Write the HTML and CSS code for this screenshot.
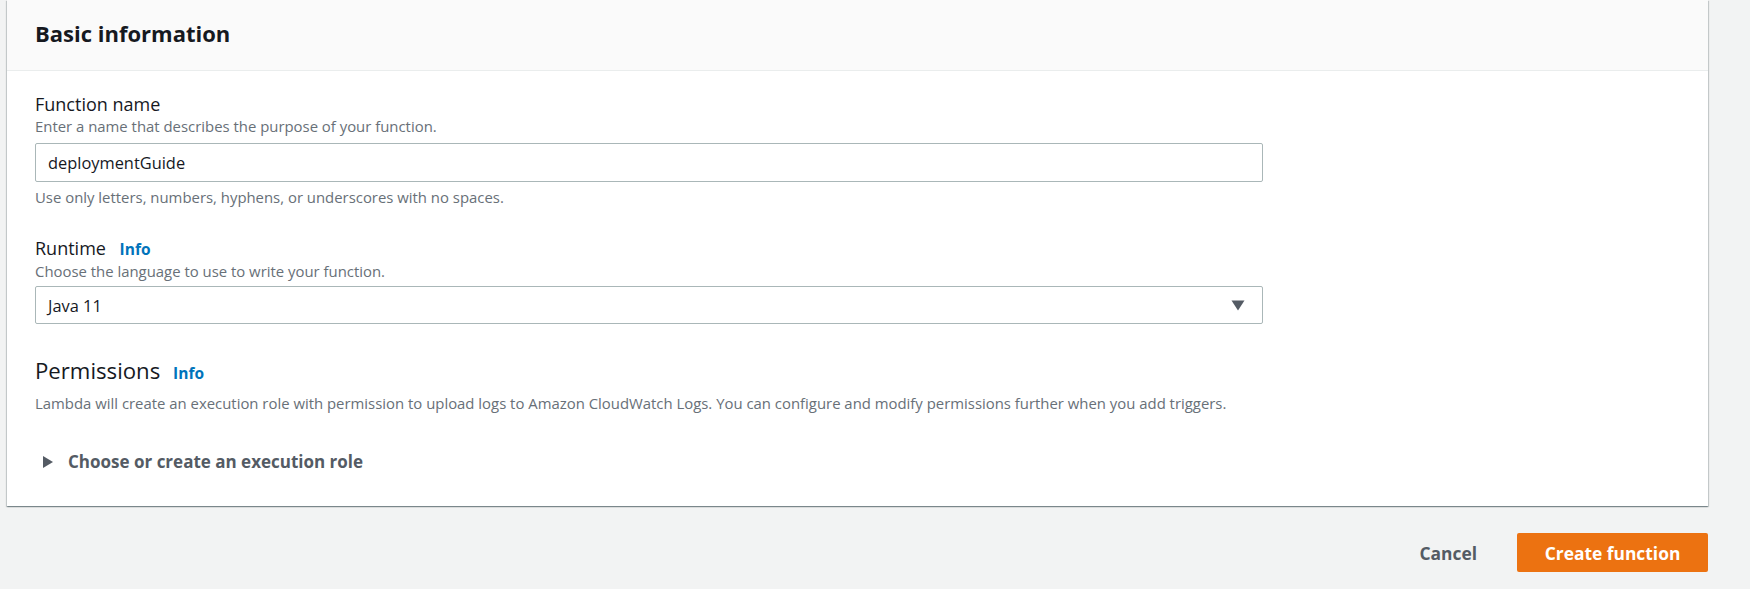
FILE: index.html
```html
<!DOCTYPE html>
<html lang="en">
<head>
<meta charset="utf-8">
<title>Basic information</title>
<link rel="stylesheet" href="styles.css">
</head>
<body>
<div class="page">
  <section class="card">
    <header class="card-header">
      <h2 class="card-title">Basic information</h2>
    </header>
    <div class="card-body">
      <div class="field">
        <div class="label">Function name</div>
        <div class="desc">Enter a name that describes the purpose of your function.</div>
        <div class="input">deploymentGuide</div>
        <div class="hint">Use only letters, numbers, hyphens, or underscores with no spaces.</div>
      </div>
      <div class="field field-runtime">
        <div class="label">Runtime <a class="info">Info</a></div>
        <div class="desc desc-2">Choose the language to use to write your function.</div>
        <div class="input select">
          <span>Java 11</span>
          <svg class="caret" width="14" height="11" viewBox="0 0 14 11"><path d="M0.5 0.5 H13.5 L7 10.5 Z" fill="#545b64"/></svg>
        </div>
      </div>
      <div class="perm">
        <h3 class="perm-title">Permissions <a class="info">Info</a></h3>
        <div class="perm-desc">Lambda will create an execution role with permission to upload logs to Amazon CloudWatch Logs. You can configure and modify permissions further when you add triggers.</div>
        <div class="expander">
          <svg class="tri" width="10" height="12" viewBox="0 0 10 12"><path d="M0 0 L10 6 L0 12 Z" fill="#545b64"/></svg>
          <span>Choose or create an execution role</span>
        </div>
      </div>
    </div>
  </section>
  <div class="actions">
    <button class="btn-link">Cancel</button>
    <button class="btn-primary">Create function</button>
  </div>
</div>
</body>
</html>
```

FILE: styles.css
```css
html, body {
  margin: 0;
  padding: 0;
}
body {
  background: #f2f3f3;
  font-family: "Open Sans", "Liberation Sans", Arial, sans-serif;
  color: #16191f;
  width: 1750px;
  height: 589px;
  overflow: hidden;
}
.page {
  padding: 0 42px 0 7px;
}
.card {
  background: #ffffff;
  box-shadow: 0 1px 1px 0 rgba(0, 28, 36, 0.3), 1px 1px 1px 0 rgba(0, 28, 36, 0.15), -1px 1px 1px 0 rgba(0, 28, 36, 0.15);
}
.card-header {
  box-sizing: border-box;
  height: 71px;
  background: #fafafa;
  border-bottom: 1px solid #eaeded;
  display: flex;
  align-items: center;
  padding-left: 28px;
  padding-bottom: 4px;
}
.card-title {
  margin: 0;
  font-size: 22px;
  line-height: 28px;
  font-weight: 700;
  color: #16191f;
}
.card-body {
  padding: 22px 28px 33px 28px;
}
.label {
  font-size: 18px;
  line-height: 22px;
  color: #16191f;
}
.desc, .hint, .perm-desc {
  font-size: 14.9px;
  line-height: 20px;
  color: #687078;
}
.desc {
  margin-top: 1px;
}
.desc-2 {
  margin-top: 2px;
}
.input {
  box-sizing: border-box;
  margin-top: 7px;
  width: 1228px;
  height: 39px;
  border: 1px solid #aab7b8;
  border-radius: 2px;
  padding: 0 12px;
  display: flex;
  align-items: center;
  font-size: 16.4px;
  color: #16191f;
}
.select {
  margin-top: 5px;
  height: 38px;
  justify-content: space-between;
  padding-right: 17px;
}
.hint {
  margin-top: 5px;
}
.field-runtime {
  margin-top: 30px;
}
.info {
  font-size: 15.5px;
  line-height: 1;
  font-weight: 700;
  color: #0073bb;
  margin-left: 9px;
  text-decoration: none;
}
.perm {
  margin-top: 33px;
}
.perm-title {
  margin: 0;
  font-size: 22.2px;
  line-height: 28px;
  font-weight: 400;
}
.perm-title .info {
  margin-left: 7px;
}
.perm-desc {
  margin-top: 8px;
}
.expander {
  margin-top: 38px;
  display: flex;
  align-items: center;
  font-size: 17px;
  line-height: 22px;
  font-weight: 700;
  color: #545b64;
  padding-left: 8px;
}
.tri {
  margin-right: 15px;
}
.actions {
  margin-top: 27px;
  display: flex;
  justify-content: flex-end;
  align-items: center;
}
.btn-link, .btn-primary {
  font-family: "Open Sans", "Liberation Sans", Arial, sans-serif;
  font-size: 17.4px;
  font-weight: 700;
  height: 39px;
  border: none;
  border-radius: 2px;
  cursor: pointer;
}
.btn-link {
  background: transparent;
  color: #545b64;
  padding: 0 20px;
  margin-right: 20px;
}
.btn-primary {
  background: #ec7211;
  color: #ffffff;
  width: 191px;
  padding: 0;
}
```
